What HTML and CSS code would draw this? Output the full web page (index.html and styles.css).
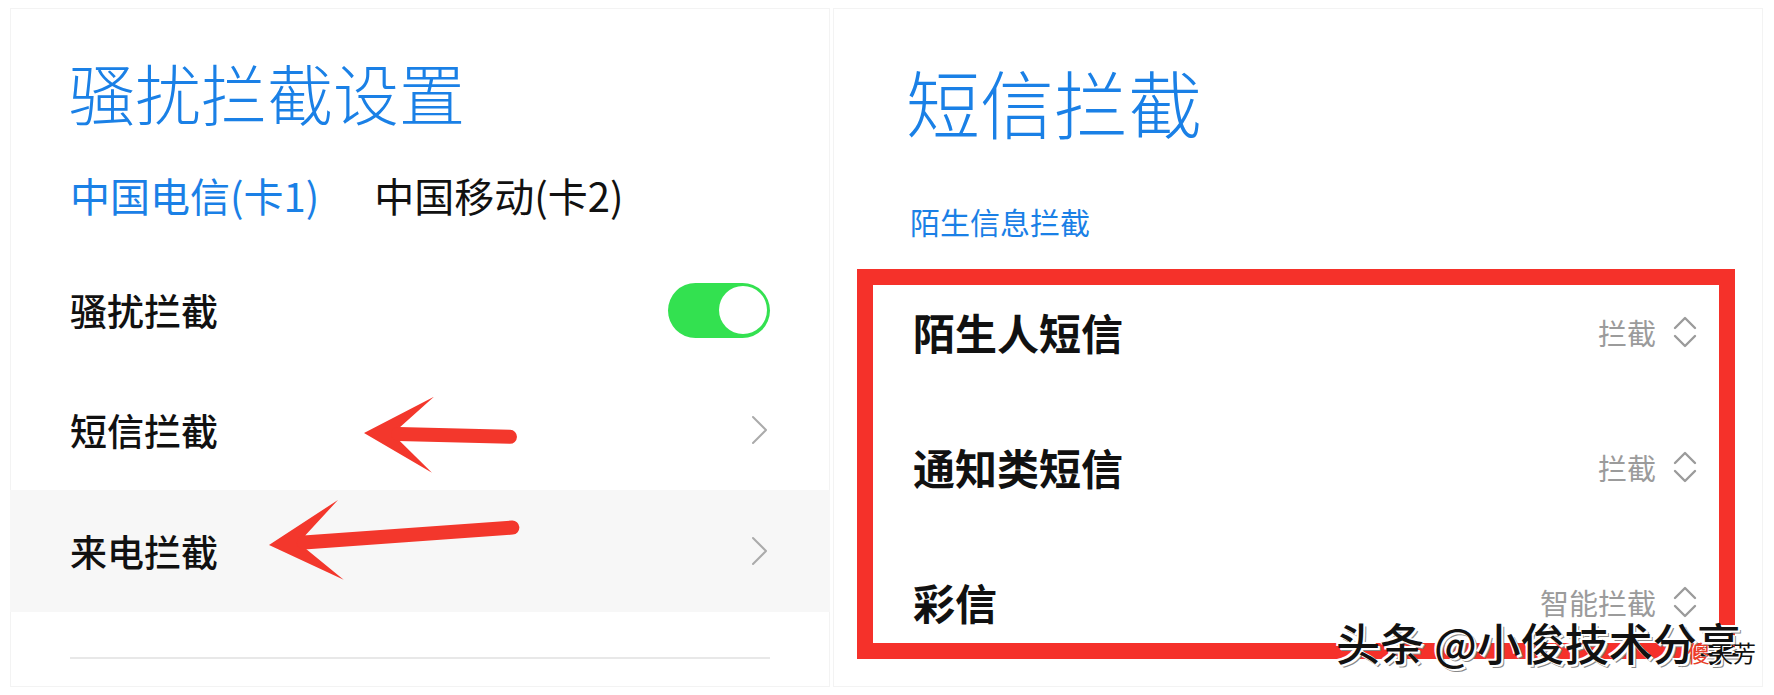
FILE: index.html
```html
<!DOCTYPE html>
<html lang="zh-CN">
<head>
<meta charset="utf-8">
<title>骚扰拦截设置</title>
<link rel="stylesheet" href="styles.css">
</head>
<body>
<div class="page">
  <section class="panel panel-left">
    <h1 class="title">骚扰拦截设置</h1>
    <div class="tabs">
      <span class="tab tab-active">中国电信(卡1)</span>
      <span class="tab">中国移动(卡2)</span>
    </div>
    <ul class="list">
      <li class="row">
        <span class="row-label">骚扰拦截</span>
        <span class="toggle"><span class="knob"></span></span>
      </li>
      <li class="row">
        <span class="row-label">短信拦截</span>
        <svg class="chevron" width="18" height="30" viewBox="0 0 18 30"><polyline points="2,2 15,15 2,28" fill="none" stroke="#ababab" stroke-width="2" stroke-linecap="round" stroke-linejoin="round"/></svg>
      </li>
      <li class="row row-pressed">
        <span class="row-label">来电拦截</span>
        <svg class="chevron" width="18" height="30" viewBox="0 0 18 30"><polyline points="2,2 15,15 2,28" fill="none" stroke="#ababab" stroke-width="2" stroke-linecap="round" stroke-linejoin="round"/></svg>
      </li>
    </ul>
    <div class="divider"></div>
  </section>

  <section class="panel panel-right">
    <h1 class="title title-lg">短信拦截</h1>
    <div class="subhead">陌生信息拦截</div>
    <div class="highlight">
      <div class="srow">
        <span class="srow-label">陌生人短信</span>
        <span class="value">拦截
          <svg class="updown" width="24" height="36" viewBox="0 0 24 36"><polyline points="2,14 12,4 22,14" fill="none" stroke="#9b9b9b" stroke-width="2.4" stroke-linecap="round" stroke-linejoin="round"/><polyline points="2,22 12,32 22,22" fill="none" stroke="#9b9b9b" stroke-width="2.4" stroke-linecap="round" stroke-linejoin="round"/></svg>
        </span>
      </div>
      <div class="srow">
        <span class="srow-label">通知类短信</span>
        <span class="value">拦截
          <svg class="updown" width="24" height="36" viewBox="0 0 24 36"><polyline points="2,14 12,4 22,14" fill="none" stroke="#9b9b9b" stroke-width="2.4" stroke-linecap="round" stroke-linejoin="round"/><polyline points="2,22 12,32 22,22" fill="none" stroke="#9b9b9b" stroke-width="2.4" stroke-linecap="round" stroke-linejoin="round"/></svg>
        </span>
      </div>
      <div class="srow">
        <span class="srow-label">彩信</span>
        <span class="value">智能拦截
          <svg class="updown" width="24" height="36" viewBox="0 0 24 36"><polyline points="2,14 12,4 22,14" fill="none" stroke="#9b9b9b" stroke-width="2.4" stroke-linecap="round" stroke-linejoin="round"/><polyline points="2,22 12,32 22,22" fill="none" stroke="#9b9b9b" stroke-width="2.4" stroke-linecap="round" stroke-linejoin="round"/></svg>
        </span>
      </div>
    </div>
    <div class="watermark">头条 @小俊技术分享</div>
    <div class="stamp"><span class="stamp-red">傻</span>天芳</div>
  </section>

  <svg class="arrows" width="1774" height="695" viewBox="0 0 1774 695">
    <g transform="translate(364,433) rotate(1.5)" fill="#f3372c">
      <polygon points="0,0 69,-38 36,-7 36,7 69,38"/>
      <line x1="34" y1="0" x2="146" y2="0" stroke="#f3372c" stroke-width="14" stroke-linecap="round"/>
    </g>
    <g transform="translate(269,545) rotate(-4.1)" fill="#f3372c">
      <polygon points="0,0 72,-40 37,-7 37,7 72,40"/>
      <line x1="35" y1="0" x2="244" y2="0" stroke="#f3372c" stroke-width="14" stroke-linecap="round"/>
    </g>
  </svg>
</div>
</body>
</html>
```

FILE: styles.css
```css
* {
  box-sizing: border-box;
}

html, body {
  margin: 0;
  padding: 0;
  background: #ffffff;
}

body {
  font-family: "Noto Sans CJK SC", "Noto Sans", sans-serif;
  color: #111111;
}

.page {
  position: relative;
  width: 1774px;
  height: 695px;
  display: flex;
  gap: 3px;
  padding: 8px 11px 8px 10px;
  overflow: hidden;
}

.panel {
  position: relative;
  height: 679px;
  background: #ffffff;
  box-shadow: inset 0 0 0 1px #f3f3f3;
}

.panel-left {
  width: 820px;
}

.panel-right {
  width: 930px;
}

.title {
  margin: 21px 0 0;
  height: 124px;
  display: flex;
  align-items: center;
  padding-left: 59px;
  font-size: 66px;
  line-height: 1;
  font-weight: 300;
  color: #1a80e6;
}

.tabs {
  height: 84px;
  display: flex;
  align-items: center;
  gap: 55px;
  padding-left: 60px;
  font-size: 40px;
  line-height: 1;
  font-weight: 400;
  color: #111111;
}

.tab-active {
  color: #1a80e6;
}

.list {
  list-style: none;
  margin: 13px 0 0;
  padding: 0;
}

.row {
  height: 120px;
  display: flex;
  align-items: center;
  justify-content: space-between;
  padding: 0 60px 0 60px;
  font-size: 37px;
  line-height: 1;
  font-weight: 500;
}

.row-pressed {
  height: 122px;
  background: #f7f7f7;
}

.chevron {
  display: block;
  margin-right: 1px;
}

.toggle {
  width: 102px;
  height: 55px;
  border-radius: 28px;
  background: #33e150;
  display: flex;
  align-items: center;
  justify-content: flex-end;
  padding-right: 3px;
}

.knob {
  width: 48px;
  height: 48px;
  border-radius: 50%;
  background: #ffffff;
}

.divider {
  margin: 45px 60px 0;
  height: 2px;
  background: #e8e8e8;
}

.title-lg {
  margin-top: 31px;
  padding-left: 73px;
  font-size: 74px;
}

.subhead {
  margin-top: 38px;
  height: 40px;
  display: flex;
  align-items: center;
  padding-left: 77px;
  font-size: 30px;
  line-height: 1;
  color: #1a80e6;
}

.highlight {
  margin: 28px 28px 0 24px;
  border: 16px solid #f5312a;
  padding: 17px 22px 11px 40px;
  display: flex;
  flex-direction: column;
  gap: 75px;
}

.srow {
  height: 60px;
  display: flex;
  align-items: center;
  justify-content: space-between;
}

.srow-label {
  font-size: 42px;
  line-height: 1;
  font-weight: 700;
  color: #111111;
}

.value {
  display: flex;
  align-items: center;
  gap: 17px;
  font-size: 29px;
  line-height: 1;
  color: #9b9b9b;
}

.updown {
  display: block;
}

.watermark {
  position: absolute;
  left: 503px;
  top: 612px;
  font-size: 44px;
  line-height: 1;
  font-weight: 500;
  color: #111111;
  white-space: nowrap;
  text-shadow: -2px -2px 0 #ffffff, 2px 2px 0 #ffffff, 3px 3px 0 #888888;
}

.stamp {
  position: absolute;
  left: 854px;
  top: 633px;
  font-size: 23px;
  line-height: 1;
  color: #111111;
  white-space: nowrap;
  text-shadow: 1px 1px 0 #ffffff;
}

.stamp-red {
  color: #e8402a;
}

.arrows {
  position: absolute;
  left: 0;
  top: 0;
  pointer-events: none;
}
```
